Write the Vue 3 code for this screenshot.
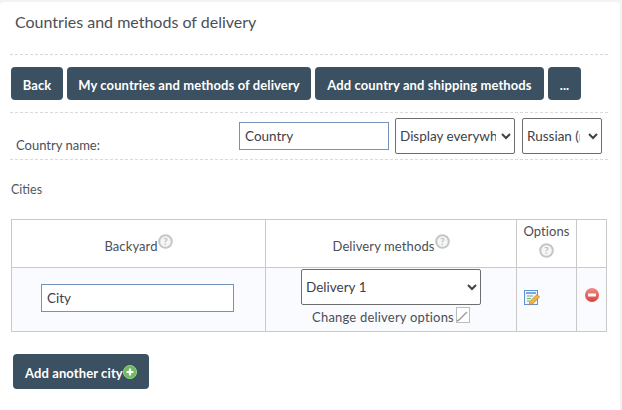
<script setup>
const buttons = ['Back', 'My countries and methods of delivery', 'Add country and shipping methods', '...']
</script>

<template>
  <div class="page">
    <main class="card">
      <h1 class="title">Countries and methods of delivery</h1>
      <nav class="toolbar">
        <button v-for="b in buttons" :key="b" class="btn" type="button">{{ b }}</button>
      </nav>
      <div class="country-row">
        <label class="country-label">Country name:</label>
        <input class="text-input country-input" value="Country" />
        <select class="sel sel-display"><option>Display everywhere</option></select>
        <select class="sel sel-lang"><option>Russian (ru)</option></select>
      </div>
      <p class="cities">Cities</p>
      <table class="grid">
        <colgroup>
          <col class="c1" /><col class="c2" /><col class="c3" /><col class="c4" />
        </colgroup>
        <thead>
          <tr>
            <th>Backyard<svg class="help raised" viewBox="0 0 16 16"><circle cx="8" cy="8" r="6.7" fill="#f6f6f6" stroke="#c6c6c6" stroke-width="2.2"/><text x="8" y="11.5" text-anchor="middle" class="q">?</text></svg></th>
            <th>Delivery methods<svg class="help raised" viewBox="0 0 16 16"><circle cx="8" cy="8" r="6.7" fill="#f6f6f6" stroke="#c6c6c6" stroke-width="2.2"/><text x="8" y="11.5" text-anchor="middle" class="q">?</text></svg></th>
            <th class="opt">Options<svg class="help block" viewBox="0 0 16 16"><circle cx="8" cy="8" r="6.7" fill="#f6f6f6" stroke="#c6c6c6" stroke-width="2.2"/><text x="8" y="11.5" text-anchor="middle" class="q">?</text></svg></th>
            <th></th>
          </tr>
        </thead>
        <tbody>
          <tr>
            <td><input class="text-input city-input" value="City" /></td>
            <td class="method">
              <select class="sel sel-method"><option>Delivery 1</option></select>
              <div class="change">Change delivery options<svg class="mini" viewBox="0 0 14 16"><rect x=".5" y=".5" width="13" height="15" fill="#fff" stroke="#bdbdbd"/><path d="M1 14 L3 13 L11 5" fill="none" stroke="#9a9a9a" stroke-width="1.4"/></svg></div>
            </td>
            <td class="edit-cell">
              <svg class="edit" viewBox="0 0 16 16">
                <rect x=".5" y=".5" width="13" height="14" fill="#eef5fd" stroke="#5b93d6"/>
                <path d="M2 3h10" stroke="#4d86cf" stroke-width="1.4"/>
                <path d="M3 6h6M3 8.5h4M3 11h3" stroke="#79b26a"/>
                <path d="M5 15 L6 11.5 L13 4.5 L15.5 7 L8.5 14 Z" fill="#f2b63c" stroke="#b9772a" stroke-width=".7"/>
              </svg>
            </td>
            <td class="del-cell">
              <svg class="del" viewBox="0 0 14 14"><defs><linearGradient id="redg" x1="0" y1="0" x2="0" y2="1"><stop offset="0" stop-color="#f08d86"/><stop offset="1" stop-color="#dd3f3b"/></linearGradient></defs><circle cx="7" cy="7" r="7" fill="url(#redg)"/><rect x="3" y="5.6" width="8" height="2.8" rx=".6" fill="#fff"/></svg>
            </td>
          </tr>
        </tbody>
      </table>
      <button class="btn add" type="button">Add another city<svg class="plus" viewBox="0 0 14 14"><circle cx="7" cy="7" r="6.6" fill="#6dbb5e" stroke="#a5dc97" stroke-width=".8"/><path d="M7 3.5v7M3.5 7h7" stroke="#fff" stroke-width="2.2"/></svg></button>
    </main>
  </div>
</template>

<style>
html, body { margin: 0; background: #f3f3f3; }
</style>

<style scoped>
.page {
  width: 622px;
  height: 410px;
  overflow: hidden;
  box-sizing: border-box;
  padding: 2px 2px 0 0;
  font-family: Lato, "Noto Sans", sans-serif;
  color: #4a4f57;
}
.card {
  height: 408px;
  box-sizing: border-box;
  background: #fff;
  border-radius: 4px 4px 0 0;
  padding: 0 0 0 10px;
}
.title {
  margin: 0 12px 0 0;
  box-sizing: border-box;
  height: 53px;
  padding: 10px 0 0 5px;
  font-size: 16px;
  line-height: 20px;
  font-weight: 400;
  color: #4a4f57;
  border-bottom: 1px dashed #d9d9d9;
}
.toolbar {
  display: flex;
  gap: 4px;
  margin-right: 12px;
  height: 58px;
  box-sizing: border-box;
  padding: 12px 0 0 1px;
  border-bottom: 1px dashed #d9d9d9;
}
.btn {
  height: 33px;
  padding: 3px 0 0;
  border: 0;
  border-radius: 4px;
  background: #3b5060;
  color: #fff;
  font: 700 13px/30px Lato, "Noto Sans", sans-serif;
  letter-spacing: .1px;
  white-space: nowrap;
}
.toolbar .btn:nth-child(1) { width: 52px; }
.toolbar .btn:nth-child(2) { width: 244px; }
.toolbar .btn:nth-child(3) { width: 229px; }
.toolbar .btn:nth-child(4) { width: 33px; }
.country-row {
  display: flex;
  align-items: center;
  margin-right: 12px;
  height: 47px;
  box-sizing: border-box;
  border-bottom: 1px dashed #d9d9d9;
  padding-left: 6px;
}
.country-label {
  width: 223px;
  font-size: 13px;
  line-height: 16px;
  padding-top: 17px;
}
.text-input {
  box-sizing: border-box;
  height: 28px;
  border: 1px solid #7393b8;
  padding: 0 5px;
  font: 13.5px Lato, "Noto Sans", sans-serif;
  color: #3d4148;
  background: #fff;
  outline: none;
}
.country-input { width: 150px; margin-right: 6px; }
.sel {
  box-sizing: border-box;
  height: 36px;
  border: 1px solid #6e6e6e;
  border-radius: 2px;
  padding: 0;
  background: #fff;
  font: 13.5px Lato, "Noto Sans", sans-serif;
  color: #3d4148;
}
.sel-display { width: 120px; margin-right: 7px; padding-right: 2px; }
.sel-lang { width: 80px; padding-right: 5px; }
.cities {
  margin: 22px 0 0 1px;
  font-size: 12.5px;
  line-height: 16px;
  color: #53585f;
}
.grid {
  margin: 21px 0 0 1px;
  width: 595px;
  table-layout: fixed;
  border-collapse: collapse;
  font-size: 13px;
  letter-spacing: .1px;
}
.c1 { width: 254px; }
.c2 { width: 251px; }
.c3 { width: 60px; }
.c4 { width: 30px; }
.grid th, .grid td {
  box-sizing: border-box;
  border: 1px solid #c9c9c9;
  padding: 0;
  text-align: center;
  font-weight: 400;
}
.grid th { height: 48px; line-height: 16px; }
.grid tbody td { height: 64px; background: #f9fbfe; }
.grid .opt { vertical-align: top; padding-top: 3px; }
.help { width: 15px; height: 15px; }
.raised { vertical-align: 2px; }
.block { display: block; margin: 4px auto 0; }
.q { font: 700 11px Lato, sans-serif; fill: #c0c0c0; }
.city-input { width: 193px; display: block; margin: 0 0 3px 29px; }
.method { vertical-align: top; }
.sel-method { display: block; width: 180px; margin: 1px 0 0 35px; }
.change { display: flex; justify-content: center; align-items: flex-start; height: 24px; padding-top: 2px; line-height: 20px; letter-spacing: .2px; }
.mini { width: 14px; height: 16px; margin-left: 2px; }
.grid .edit-cell { padding-bottom: 4px; }
.grid .del-cell { padding-bottom: 9px; }
.edit { width: 16px; height: 16px; display: block; margin: 0 0 0 7px; }
.del { width: 14px; height: 14px; display: block; margin: 0 auto; }
.add {
  display: flex;
  align-items: center;
  margin: 22px 0 0 3px;
  height: 35px;
  width: 136px;
  padding: 3px 0 0 12px;
}
.plus { width: 14px; height: 14px; margin-top: -3px; }
</style>
